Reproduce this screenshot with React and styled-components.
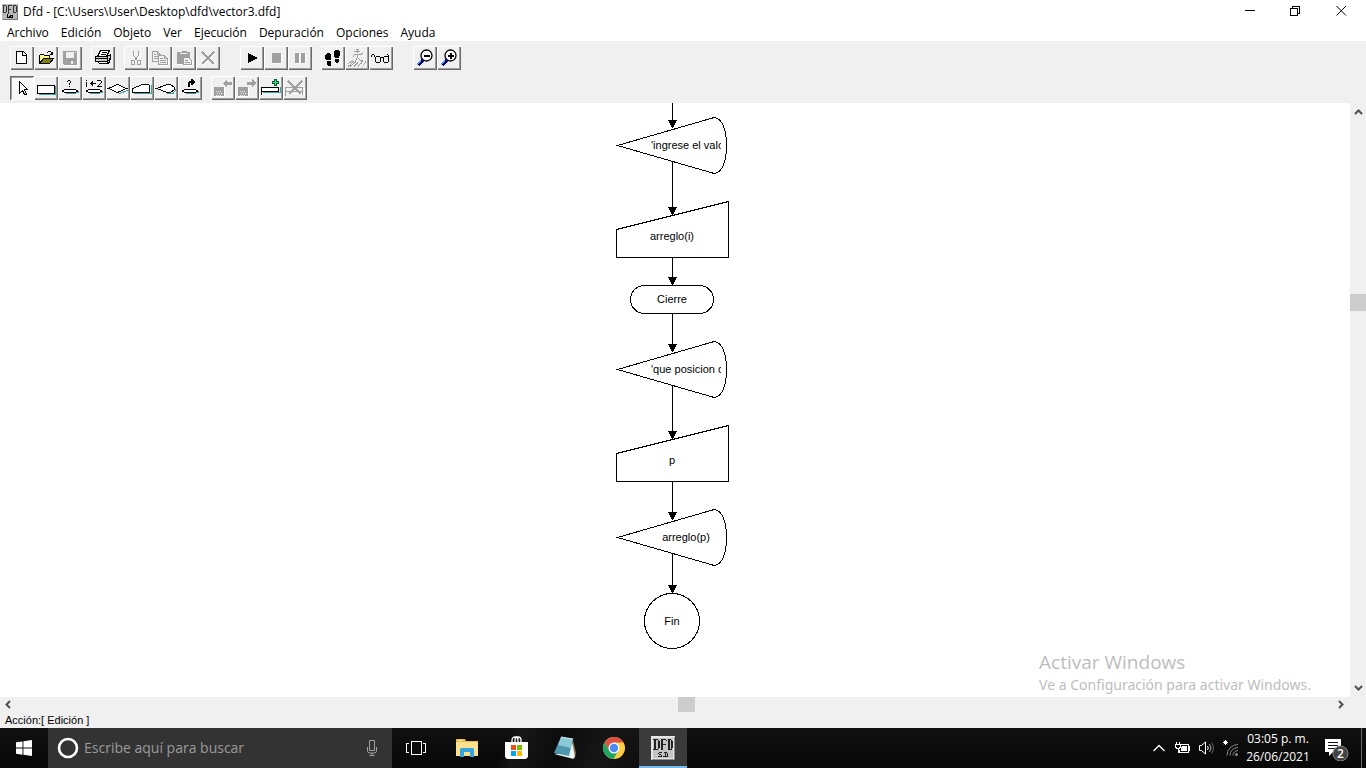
import React from "react";
import styled, { createGlobalStyle, css } from "styled-components";

const GlobalStyle = createGlobalStyle`
  *, *::before, *::after { box-sizing: border-box; }
  html, body { margin: 0; background: #fff; }
  body { font-family: "Open Sans", "Noto Sans", sans-serif; color: #000; }
  button, input { font: inherit; color: inherit; margin: 0; padding: 0; border: 0; background: none; }
  svg { display: block; flex: none; }
`;

const Screen = styled.div`
  display: flex;
  flex-direction: column;
  min-height: 100vh;
`;

/* ---------- title and menu ---------- */

const TitleBar = styled.header`
  display: flex;
  align-items: center;
  height: 23px;
  padding: 0 2px;
  background: #fff;
`;

const Title = styled.h1`
  flex: 1;
  margin: 0;
  padding-left: 5px;
  font: 400 12px/20px "Open Sans", sans-serif;
  white-space: nowrap;
`;

const WindowButton = styled.button`
  display: flex;
  align-items: center;
  justify-content: center;
  width: 46px;
  height: 20px;
`;

const MenuBar = styled.nav`
  display: flex;
  height: 18px;
  padding-left: 7px;
  gap: 12px;
  background: #fff;
`;

const MenuItem = styled.button`
  font-size: 12px;
  line-height: 20px;
  white-space: nowrap;
`;

/* ---------- tool bars ---------- */

const ToolArea = styled.div`
  display: flex;
  flex-direction: column;
  gap: 6px;
  padding: 5px 10px 3px;
  background: #f0f0f0;
`;

const ToolRow = styled.div`
  display: flex;
`;

const ToolGroup = styled.div`
  display: flex;
  margin-right: ${(p) => p.$after || 9}px;
`;

const pressed = css`
  background: #f8f8f8;
  box-shadow: inset 1px 1px #696969, inset -1px -1px #fff, inset 2px 2px #a0a0a0;
`;

const raised = css`
  background: #f0f0f0;
  box-shadow: inset 1px 1px #fff, inset -1px -1px #696969, inset -2px -2px #a0a0a0;
`;

const ToolButton = styled.button`
  width: 24px;
  height: 24px;
  ${(p) => (p.$pressed ? pressed : raised)}
`;

/* ---------- canvas ---------- */

const Workspace = styled.main`
  display: flex;
  flex: 1;
  min-height: 594px;
`;

const Canvas = styled.section`
  position: relative;
  display: flex;
  flex: 1;
  justify-content: center;
  min-width: 0;
  background: #fff;
`;

const NodeText = styled.text`
  font: 11px "Liberation Sans", Arial, sans-serif;
  fill: #000;
`;

const Watermark = styled.aside`
  position: absolute;
  right: 39px;
  bottom: 2px;
  color: #bdbdbd;
`;

const WatermarkTitle = styled.p`
  margin: 0;
  font-size: 19px;
  line-height: 25px;
`;

const WatermarkText = styled.p`
  margin: 0;
  font: 14px/20px "Noto Sans", sans-serif;
  white-space: nowrap;
`;

/* ---------- scroll bars ---------- */

const ScrollBar = styled.div`
  display: flex;
  flex-direction: ${(p) => (p.$vertical ? "column" : "row")};
  background: #f0f0f0;
  ${(p) => (p.$vertical ? "width: 16px;" : "height: 15px; margin-right: 16px;")}
`;

const ScrollRow = styled.div`
  background: #f0f0f0;
`;

const ScrollArrow = styled.button`
  display: flex;
  align-items: center;
  justify-content: center;
  flex: 0 0 17px;
`;

const ScrollSpace = styled.div`
  flex: ${(p) => p.$share} 1 0;
`;

const ScrollThumb = styled.div`
  flex: 0 0 17px;
  background: #cdcdcd;
`;

const StatusBar = styled.footer`
  height: 16px;
  padding-left: 5px;
  background: #f0f0f0;
  font: 11px/16px "Liberation Sans", Arial, sans-serif;
`;

/* ---------- task bar ---------- */

const TaskBar = styled.div`
  display: flex;
  height: 40px;
  background:
    linear-gradient(112deg, transparent 37%, #171717 38%, #0b0b0b 41%, #161616 44%, transparent 50%),
    linear-gradient(#101010, #070707);
  color: #fff;
`;

const TaskButton = styled.button`
  display: flex;
  align-items: center;
  justify-content: center;
  width: 48px;
  height: 40px;
  ${(p) => p.$active && "background: #3b3b3b; border-bottom: 2px solid #76b9ed; padding-top: 2px;"}
`;

const TaskApps = styled.div`
  display: flex;
  flex: 1;
  gap: 1px;
  margin-left: 3px;
`;

const SearchBox = styled.label`
  display: flex;
  align-items: center;
  flex: 0 0 344px;
  padding: 0 12px 0 9px;
  background: #333;
`;

const SearchInput = styled.input`
  flex: 1;
  min-width: 0;
  margin-left: 5px;
  font-size: 14px;
  line-height: 20px;
  outline: none;
  &::placeholder { color: #9b9b9b; opacity: 1; }
`;

const Tray = styled.div`
  display: flex;
  align-items: center;
`;

const TrayButton = styled.button`
  display: flex;
  align-items: center;
  justify-content: center;
  width: 24px;
  height: 40px;
`;

const Clock = styled.time`
  width: 70px;
  font: 12px/18px "Open Sans", sans-serif;
  text-align: center;
  white-space: nowrap;
`;

const Notifications = styled.button`
  display: flex;
  align-items: center;
  justify-content: center;
  width: 48px;
  height: 40px;
`;

const ShowDesktop = styled.button`
  width: 5px;
  height: 40px;
  border-left: 1px solid #6b6b6b;
`;

/* ---------- icons ---------- */

const Icon = ({ children, size = 24, ...rest }) => (
  <svg width={size} height={size} viewBox={`0 0 ${size} ${size}`} fill="none" stroke="#000" shapeRendering="crispEdges" aria-hidden="true" {...rest}>
    {children}
  </svg>
);

const G = "#a0a0a0";
const TEAL = "#40a0a0";

const DfdLogo = ({ size }) => (
  <svg width={size} height={size} viewBox="0 0 24 24" shapeRendering="crispEdges" aria-hidden="true">
    <path fill="#e6e6e6" d="M0 0h24v24H0z" />
    <path fill="#8a8a8a" d="M23 1h1v23H1v-1h22z" />
    <path fill="#c3c3c3" d="M2 2h20v20H2z" />
    <g fill="none" stroke="#222">
      <path d="M2 3.500h5M4.500 3v10M3.500 4v9M2 13.500h5M7.500 4v9M8.500 5v7" />
      <path d="M10 3.500h5M11.500 3v11M10.500 3v11M12 8.500h3M15 4v1" />
      <path d="M17 3.500h3M17.500 3v10M18.500 4v9M17 13.500h4M20.500 4v9M21.500 5v7" />
      <path d="M8 16.500h3M7.500 17v1M8 18.500h2M10.500 19v2M7 20.500h3M12 20.500h2M14.500 16v5M13 16.500h3M16.500 17v4M14 20.500h2" />
    </g>
  </svg>
);

const DfdSmall = () => (
  <svg width="16" height="16" viewBox="0 0 16 16" shapeRendering="crispEdges" aria-hidden="true">
    <path fill="#b9b9b9" d="M0 0h16v16H0z" />
    <path fill="#777" d="M15 1h1v15H1v-1h14z" />
    <g fill="none" stroke="#333">
      <path d="M1 1.500h3M1.500 1v8M1 8.500h3M4.500 2v6M6.500 1v9M6 1.500h4M7 5.500h2M11.500 1v8M11 1.500h3M14.500 2v6M11 8.500h3" />
      <path stroke="#000" d="M5.500 10v4M6 13.500h5M7 12.500h2M8 11.500h2M10.500 11v3" />
    </g>
  </svg>
);

const Disc = ({ y = 15 }) => (
  <>
    <path stroke={TEAL} d={`M8 ${y + 2.5}h10M17 ${y + 1.5}h4M20 ${y + 0.5}h1`} />
    <path fill="#fff" d={`M7.500 ${y - 1.5}h9l3 1v1l-3 1h-9l-3-1v-1z`} />
  </>
);

const icons = {
  nuevo: <path fill="#fff" d="M6.500 5.500h7l3 3v9h-10zM12.500 5.500v4h4" />,
  abrir: (
    <>
      <path fill="#ffff80" d="M5.500 17.500v-8l1-1h3l1 1h5v3" />
      <path fill="#808000" d="M5.500 17.500l4-5h10l-4 5z" />
      <path d="M13.500 6v1M14 5.500h3M17.500 6v2M16 8.500h3M18.500 6v2" />
    </>
  ),
  guardar: (
    <>
      <path fill={G} stroke="none" d="M5 5h14v14H6l-1-1z" />
      <path fill="#f0f0f0" stroke="none" d="M8 6h8v6H8zM13 15h2v3h-2z" />
      <path stroke="#fff" d="M6 19.500h14M19.500 6v13M17.500 6v1" />
    </>
  ),
  imprimir: (
    <>
      <path fill="#fff" d="M9.500 4.500h9l-3 6h-9z" />
      <path d="M11 6.500h5M10 8.500h5" />
      <path fill="#d0d0d0" d="M4.500 10.500h12v5h-12zM16.500 10.500l3-2v5l-3 2" />
      <path fill="#fff" d="M6.500 15.500h10v2h-8z" />
      <path d="M5 12.500h11M17 17.500l2-2M18.500 12v3" />
      <path stroke="#d0d000" d="M12 14h2" />
    </>
  ),
  cortar: (
    <>
      <path stroke="#fff" d="M10.500 6v4l5 5M16.500 6v4l-6 5" />
      <path stroke={G} d="M9.500 5v4l2 3 2 3M14.500 5v4l-2 3-2 3M7.500 14.500h3v4h-3zM13.500 14.500h3v4h-3z" />
    </>
  ),
  copiar: (
    <g stroke={G}>
      <path d="M4.500 5.500h5l3 3v7h-8zM9.500 5.500v3h3M6 8.500h2M6 10.500h4M6 12.500h4" />
      <path fill="#f0f0f0" d="M10.500 9.500h6l3 3v6h-9zM16.500 9.500v3h3M12 12.500h3M12 14.500h6M12 16.500h6" />
      <path stroke="#fff" d="M11 19.500h9.500V13" />
    </g>
  ),
  pegar: (
    <>
      <path fill={G} stroke="none" d="M5 6h4l1-1h4l1 1h3v12H5z" />
      <path stroke="#f0f0f0" d="M8 7.500h7" />
      <path fill="#f0f0f0" stroke={G} d="M11.500 11.500h5l3 3v4h-8zM13 14.500h3M13 16.500h5" />
      <path stroke="#fff" d="M12 19.500h8.500V15M5 18.500h5" />
    </>
  ),
  borrar: (
    <>
      <path stroke="#fff" strokeWidth="2" d="M7 7l12 12M19 7L7 19" />
      <path stroke={G} strokeWidth="2" d="M6 6l12 12M18 6L6 18" />
    </>
  ),
  ejecutar: <path fill="#000" stroke="none" d="M8 7l10 5-10 5z" />,
  detener: (
    <>
      <path fill="#fff" stroke="none" d="M9 8h9v10H9z" />
      <path fill={G} stroke="none" d="M8 7h9v10H8z" />
    </>
  ),
  pausa: (
    <>
      <path fill="#fff" stroke="none" d="M8 8h4v10H8zM14 8h4v10h-4z" />
      <path fill={G} stroke="none" d="M7 7h4v10H7zM13 7h4v10h-4z" />
    </>
  ),
  pasos: (
    <path fill="#000" stroke="none" d="M6 7h3l1 2v5H5l-1-2V9zM6 15h4v4l-1 1H7l-1-1zM14 4h4l1 2v3l-1 3h-4l-1-3V6zM14 13h4v2l-1 2h-2l-1-1z" />
  ),
  corredor: (
    <g stroke={G}>
      <path d="M11 3.500h3M9 5.500h6M12.500 4v3M9 8.500h8M8.500 9v2M16 7.500h2M12.500 8v4M12 12.500l-2 3M13 12.500l3 2v3M9 15.500l-6 5M3 17.500l5-3M5 20.500l6-5M9 20.500l4-4M13 20.500l5-6M17 20.500l4-5" />
      <path stroke="#fff" d="M13.500 9v3M17 16.500v3M7 20.500l4-3" />
    </g>
  ),
  lentes: (
    <path d="M2.500 11v-2M3 8.500h2M5.500 9v2M6.500 11v5M7 10.500h4M11.500 11v5M7 16.500h4M12 11.500h2M14.500 11v5M15 10.500h4M19.500 9v7M15 16.500h4M18.500 8v1" />
  ),
  alejar: <Magnifier />,
  acercar: <Magnifier plus />,
  cursor: <path fill="#fff" d="M9.500 5.500v12l3-3 2 4h2l-2-5h3z" />,
  asignar: (
    <>
      <path stroke={TEAL} d="M5 18.500h17M21.500 10v9" />
      <path fill="#fff" d="M3.500 9.500h17v8h-17z" />
    </>
  ),
  lectura: (
    <>
      <Disc />
      <path d="M9.500 5v1M10 4.500h2M12.500 5v2M11.500 7v2M11.500 10v1" />
    </>
  ),
  formula: (
    <>
      <Disc />
      <path d="M4.500 4v1M4 6.500h1M4.500 7v4M8 7.500h6M9 6.500h2M9 8.500h2M10.500 5v5M15 4.500h4M19.500 5v2M18 7.500h1M17 8.500h1M16 9.500h1M15 10.500h5" />
    </>
  ),
  rombo: (
    <>
      <path stroke={TEAL} d="M13 18l9-4" />
      <path fill="#fff" d="M2.500 12.500l9-4 9 4-9 4z" />
    </>
  ),
  entrada: (
    <>
      <path stroke={TEAL} d="M4 17.500h17.500V9" />
      <path fill="#fff" d="M2.500 16.500v-4l10-4h6l1 1v7z" />
    </>
  ),
  salida: (
    <>
      <path stroke={TEAL} d="M13 17.500h6l3-4" />
      <path fill="#fff" d="M2.500 12.500l11-4h3l4 3v2l-4 3h-3z" />
    </>
  ),
  subprograma: (
    <>
      <Disc />
      <path strokeWidth="2" d="M11 11V7l1-1h3M14 3v6M15 4v4M16 5v2" />
    </>
  ),
  anterior: (
    <>
      <path fill="#fff" stroke="none" d="M4 12h10v9H4z" />
      <path fill={G} stroke="none" d="M3 11h10v9H3zM12 7l4-4v3h5v3h-5v3z" />
      <path stroke="#f0f0f0" strokeDasharray="1 1" d="M5 15.500h6M6 17.500h6M5 19.500h5" />
    </>
  ),
  siguiente: (
    <>
      <path fill="#fff" stroke="none" d="M4 12h10v9H4z" />
      <path fill={G} stroke="none" d="M3 11h10v9H3zM21 7l-4-4v3h-5v3h5v3z" />
      <path stroke="#f0f0f0" strokeDasharray="1 1" d="M5 15.500h6M6 17.500h6M5 19.500h5" />
    </>
  ),
  agregar: (
    <>
      <path stroke={TEAL} d="M4 16.500h17.500V11" />
      <path fill="#fff" d="M2.500 11.500h17v4h-17z" />
      <path d="M2.500 15v4" />
      <path fill="#40e080" stroke="#006030" d="M15.500 3.500h2v2h2v2h-2v2h-2v-2h-2v-2h2z" />
    </>
  ),
  quitar: (
    <>
      <path stroke="#fff" d="M4 17.500h18M21.500 12v8M7 6l13 13" />
      <path stroke={G} d="M2.500 11.500h17v4h-17zM2.500 16v4M19.500 16v3" />
      <path stroke={G} strokeWidth="2" d="M5 5l13 13M19 5L6 18" />
    </>
  ),
};

function Magnifier({ plus }) {
  return (
    <>
      <path stroke="#000080" strokeWidth="3" d="M5 19l5-5" />
      <path stroke="#60a0e0" d="M4 18.500l4-4" />
      <g shapeRendering="auto">
        <circle cx="13.500" cy="9.500" r="5.500" fill="#fff" strokeWidth="1.300" />
      </g>
      <path strokeWidth="2" d="M11 10h6" />
      {plus && <path strokeWidth="2" d="M14 7v6" />}
    </>
  );
}

const Chevron = ({ dir }) => (
  <svg width="11" height="11" viewBox="-5 -5 11 11" fill="none" stroke="#505050" strokeWidth="2" aria-hidden="true">
    <path d={{ up: "M-3 3l3.500-3.500L4 3", down: "M-3-2l3.500 3.500L4-2", left: "M2-3L-1.500.500L2 4", right: "M-2-3L1.500.500L-2 4" }[dir]} />
  </svg>
);

/* ---------- data ---------- */

const menus = ["Archivo", "Edición", "Objeto", "Ver", "Ejecución", "Depuración", "Opciones", "Ayuda"];

const fileTools = [
  { names: ["nuevo", "abrir", "guardar"] },
  { names: ["imprimir"] },
  { names: ["cortar", "copiar", "pegar", "borrar"], after: 20 },
  { names: ["ejecutar", "detener", "pausa"] },
  { names: ["pasos", "corredor", "lentes"], after: 20 },
  { names: ["alejar", "acercar"] },
];

const objectTools = [
  { names: ["cursor", "asignar", "lectura", "formula", "rombo", "entrada", "salida", "subprograma"] },
  { names: ["anterior", "siguiente", "agregar", "quitar"] },
];

const Tools = ({ groups }) => (
  <ToolRow role="toolbar">
    {groups.map((g) => (
      <ToolGroup key={g.names[0]} $after={g.after}>
        {g.names.map((n) => (
          <ToolButton key={n} aria-label={n} $pressed={n === "cursor"}>
            <Icon>{icons[n]}</Icon>
          </ToolButton>
        ))}
      </ToolGroup>
    ))}
  </ToolRow>
);

/* ---------- flow chart ---------- */

const Arrow = ({ from, to }) => (
  <>
    <path d={`M60.500 ${from}V${to}`} />
    <path fill="#000" stroke="none" d={`M56 ${to - 8}h9l-4 8h-1z`} />
  </>
);

const Output = ({ y, text, clipped }) => (
  <>
    <path d={`M5.500 ${y + 0.5}l95-27.500c8-2 14 9 14 27.500s-6 29.500-14 27.500z`} />
    <svg x="39" y={y - 10} width="70" height="20" stroke="none">
      <NodeText x={clipped ? 0 : 35} y="14" textAnchor={clipped ? "start" : "middle"}>{text}</NodeText>
    </svg>
  </>
);

const Input = ({ y, text }) => (
  <>
    <path d={`M4.500 ${y + 28.5}l112-28v56h-112z`} />
    <NodeText stroke="none" x="60" y={y + 39} textAnchor="middle">{text}</NodeText>
  </>
);

const FlowChart = () => (
  <svg width="126" height="594" viewBox="0 0 126 594" fill="none" stroke="#000" shapeRendering="crispEdges" role="img" aria-label="Diagrama de flujo">
    <Arrow from={0} to={25} />
    <Output y={42} text="'ingrese el valo" clipped />
    <Arrow from={59} to={112} />
    <Input y={98} text="arreglo(i)" />
    <Arrow from={154} to={182} />
    <rect x="18.500" y="182.500" width="83" height="28" rx="14" />
    <NodeText stroke="none" x="60" y="200" textAnchor="middle">Cierre</NodeText>
    <Arrow from={210} to={249} />
    <Output y={266} text="'que posicion d" clipped />
    <Arrow from={283} to={336} />
    <Input y={322} text="p" />
    <Arrow from={378} to={417} />
    <Output y={434} text="arreglo(p)" />
    <Arrow from={451} to={490} />
    <circle cx="60" cy="518" r="27.500" />
    <NodeText stroke="none" x="60" y="522" textAnchor="middle">Fin</NodeText>
  </svg>
);

/* ---------- page ---------- */

export default function App() {
  return (
    <Screen>
      <GlobalStyle />
      <TitleBar>
        <DfdSmall />
        <Title>{"Dfd - [C:\\Users\\User\\Desktop\\dfd\\vector3.dfd]"}</Title>
        <WindowButton aria-label="Minimizar">
          <Icon size={11}><path d="M1 4.500h10" /></Icon>
        </WindowButton>
        <WindowButton aria-label="Restaurar">
          <Icon size={11}><path d="M.500 2.500h7v7h-7zM2.500 2V.500h7v7H8" /></Icon>
        </WindowButton>
        <WindowButton aria-label="Cerrar">
          <Icon size={11} shapeRendering="auto"><path d="M.500 0l9.500 9.500M10 0L.500 9.500" /></Icon>
        </WindowButton>
      </TitleBar>
      <MenuBar>
        {menus.map((m) => <MenuItem key={m}>{m}</MenuItem>)}
      </MenuBar>
      <ToolArea>
        <Tools groups={fileTools} />
        <Tools groups={objectTools} />
      </ToolArea>

      <Workspace>
        <Canvas>
          <FlowChart />
          <Watermark>
            <WatermarkTitle>Activar Windows</WatermarkTitle>
            <WatermarkText>Ve a Configuración para activar Windows.</WatermarkText>
          </Watermark>
        </Canvas>
        <ScrollBar $vertical>
          <ScrollArrow aria-label="Subir"><Chevron dir="up" /></ScrollArrow>
          <ScrollSpace $share={174} />
          <ScrollThumb />
          <ScrollSpace $share={369} />
          <ScrollArrow aria-label="Bajar"><Chevron dir="down" /></ScrollArrow>
        </ScrollBar>
      </Workspace>
      <ScrollRow>
        <ScrollBar>
          <ScrollArrow aria-label="Izquierda"><Chevron dir="left" /></ScrollArrow>
          <ScrollSpace $share={661} />
          <ScrollThumb />
          <ScrollSpace $share={638} />
          <ScrollArrow aria-label="Derecha"><Chevron dir="right" /></ScrollArrow>
        </ScrollBar>
      </ScrollRow>
      <StatusBar>Acción:[ Edición ]</StatusBar>

      <TaskBar>
        <TaskButton aria-label="Inicio">
          <svg width="16" height="16" viewBox="0 0 16 16" fill="#fff" aria-hidden="true">
            <path d="M0 2.300L6.500 1.400v6.200H0zM7.400 1.200L16 0v7.600H7.400zM0 8.500h6.500v6.200L0 13.800zM7.400 8.500H16V16l-8.600-1.200z" />
          </svg>
        </TaskButton>
        <SearchBox>
          <svg width="22" height="22" viewBox="0 0 22 22" fill="none" stroke="#fff" strokeWidth="2.600" aria-hidden="true">
            <circle cx="11" cy="11" r="9" />
          </svg>
          <SearchInput placeholder="Escribe aquí para buscar" aria-label="Buscar" />
          <svg width="16" height="18" viewBox="0 0 16 18" fill="none" stroke="#a0a0a0" aria-hidden="true">
            <path d="M5.500 1.500h5v10h-5zM3.500 8v4.500l1.500 1.500h6l1.500-1.500V8M8 14v2.500M5.500 16.500h5" />
          </svg>
        </SearchBox>
        <TaskButton aria-label="Vista de tareas">
          <Icon size={20} stroke="#fff"><path d="M5.500 3.500h10v13h-10zM3 5.500H.500v9H3M17 5.500h2.500v9H17" /></Icon>
        </TaskButton>
        <TaskApps>
          <TaskButton aria-label="Explorador de archivos">
            <svg width="22" height="20" viewBox="0 0 22 20" aria-hidden="true">
              <path fill="#e8b93c" d="M0 1h9l1 2h12v4H0z" />
              <path fill="#fbe08e" d="M0 4h22v14H0z" />
              <path fill="#fff2be" d="M2 2h5v1H2z" />
              <path fill="#35a5e0" d="M4 11l1-1h12l1 1v8h-4v-5H8v5H4z" />
            </svg>
          </TaskButton>
          <TaskButton aria-label="Tienda">
            <svg width="24" height="24" viewBox="0 0 24 24" aria-hidden="true">
              <path fill="none" stroke="#fff" strokeWidth="1.300" d="M8 7V4a3 3 0 0 1 6 0v3M11 7V4a3 3 0 0 1 6 0v3" />
              <path fill="#fff" d="M1 6h23v15l-2 2H3l-2-2z" />
              <path fill="#f04e1f" d="M7 9h5v5H7z" />
              <path fill="#7fba00" d="M13 9h5v5h-5z" />
              <path fill="#00a4ef" d="M7 15h5v5H7z" />
              <path fill="#ffb900" d="M13 15h5v5h-5z" />
            </svg>
          </TaskButton>
          <TaskButton aria-label="Bloc de notas">
            <svg width="24" height="24" viewBox="0 0 24 24" aria-hidden="true">
              <path fill="#8a7048" d="M20 4l3 13-1 4-3-3z" />
              <path fill="#eef4f6" d="M1 18l16 4 3 1 2-2-3-16-4 12z" />
              <path fill="#4f97ac" d="M8 1l12 2-4 17-15-3z" />
              <path fill="#8cc9d6" d="M8 1l12 2-2 9-13-3z" />
              <path stroke="#d8e8ec" d="M8 1l12 2" />
            </svg>
          </TaskButton>
          <TaskButton aria-label="Chrome">
            <svg width="24" height="24" viewBox="0 0 24 24" aria-hidden="true">
              <circle cx="12" cy="12" r="11" fill="#ffcd40" />
              <path fill="#dd5144" d="M2.500 6.500A11 11 0 0 1 21.500 6.500H12L7.200 14.700z" />
              <path fill="#1da462" d="M2.500 6.500A11 11 0 0 0 11.500 23l5-8.500-4.500 2-4.800-2z" />
              <circle cx="12" cy="12" r="5.500" fill="#fff" />
              <circle cx="12" cy="12" r="4.200" fill="#4a8af4" />
            </svg>
          </TaskButton>
          <TaskButton aria-label="Dfd" $active><DfdLogo size={24} /></TaskButton>
        </TaskApps>
        <Tray>
          <TrayButton aria-label="Iconos ocultos">
            <svg width="14" height="10" viewBox="0 0 14 10" fill="none" stroke="#fff" strokeWidth="1.300" aria-hidden="true"><path d="M1.500 8L7 2.500 12.500 8" /></svg>
          </TrayButton>
          <TrayButton aria-label="Batería">
            <svg width="18" height="14" viewBox="0 0 18 14" fill="none" stroke="#fff" shapeRendering="crispEdges" aria-hidden="true">
              <path d="M7 3.500h7.500v8h-9V9M14.500 5.500h1v4h-1M2.500 1v2M5.500 1v2M1 3.500h6M1.500 4v2l1 1h3l1-1V4M4 7v4h1" />
              <path fill="#fff" stroke="none" d="M8 5h5v5H7V8z" />
            </svg>
          </TrayButton>
          <TrayButton aria-label="Volumen">
            <svg width="18" height="14" viewBox="0 0 18 14" fill="none" stroke="#fff" aria-hidden="true">
              <path d="M1.500 4.500h2l4-3.500v12l-4-3.500h-2zM9.500 5q1.500 2 0 4" />
              <path stroke="#aaa" d="M11.500 3q3 4 0 8" />
              <path stroke="#666" d="M13.500 1.500q4 5.500 0 11" />
            </svg>
          </TrayButton>
          <TrayButton aria-label="Red">
            <svg width="18" height="18" viewBox="0 0 18 18" fill="none" stroke="#888" aria-hidden="true">
              <path d="M5 16.500A11 11 0 0 1 16 5.500M8 16.500a8 8 0 0 1 8-8M11 16.500a5 5 0 0 1 5-5" />
              <circle cx="14.500" cy="15.500" r="1.500" fill="#888" stroke="none" />
              <path stroke="#fff" d="M3.500 1v5M1 3.500h5M1.800 1.800l3.400 3.400M5.200 1.800L1.800 5.200" />
            </svg>
          </TrayButton>
          <Clock>03:05 p. m.<br />26/06/2021</Clock>
          <Notifications aria-label="2 notificaciones">
            <svg width="26" height="26" viewBox="0 0 26 26" aria-hidden="true">
              <path fill="#fff" d="M1 4h16v13H9l-4 4v-4H1z" />
              <path stroke="#111" d="M4 7.500h10M4 10.500h10M4 13.500h7" />
              <circle cx="16.500" cy="18.500" r="7.500" fill="#444" stroke="#888" />
              <text x="16.500" y="23" textAnchor="middle" fill="#fff" fontSize="12" fontWeight="600" fontFamily="Open Sans">2</text>
            </svg>
          </Notifications>
          <ShowDesktop aria-label="Mostrar escritorio" />
        </Tray>
      </TaskBar>
    </Screen>
  );
}
